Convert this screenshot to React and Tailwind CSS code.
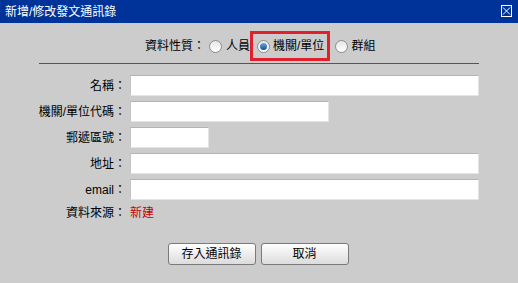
import { useState } from 'react';

const FONT = 'font-["Liberation_Sans","Noto_Sans_CJK_TC",sans-serif]';

function Radio({ checked }) {
    return (
        <span className="flex h-[13px] w-[13px] shrink-0 items-center justify-center rounded-full border border-[#8c8c8c] bg-gradient-to-b from-[#e6e6e6] to-white">
            {checked && (
                <span className="h-[7px] w-[7px] rounded-full bg-gradient-to-b from-[#6aa8e0] to-[#0f4f96]" />
            )}
        </span>
    );
}

function Field({ label, width }) {
    return (
        <div className="flex h-[21px] items-center">
            <span className="w-[126px] text-right">{label}</span>
            <input
                type="text"
                className={`ml-[4px] h-[21px] ${width} border border-t-[#b4b4b4] border-l-[#c4c4c4] border-r-[#e4e4e4] border-b-[#e4e4e4] bg-white outline-none`}
            />
        </div>
    );
}

export default function App() {
    const [kind, setKind] = useState('org');

    return (
        <div className={`h-[283px] w-[518px] bg-[#cccccc] text-[12px] leading-none text-black ${FONT}`}>
            {/* Title bar */}
            <div className="flex h-[23px] items-center justify-between bg-[#003399] pl-[5px] pr-[6px] text-white">
                <span>新增/修改發文通訊錄</span>
                <svg width="11" height="12" viewBox="0 0 11 12" className="mb-[1px]">
                    <rect x="0.5" y="0.5" width="10" height="11" fill="none" stroke="white" />
                    <path d="M2 2.5 L9 9.5 M9 2.5 L2 9.5" stroke="white" strokeWidth="1" />
                </svg>
            </div>

            {/* Type selector */}
            <div className="mt-[8px] flex h-[30px] items-center pl-[145px]">
                <span>資料性質：</span>
                <button className="ml-[4px] flex items-center gap-[4px]" onClick={() => setKind('person')}>
                    <Radio checked={kind === 'person'} />
                    <span>人員</span>
                </button>
                <button
                    className="flex h-[30px] items-center gap-[3px] border-[3px] border-[#e0202a] pl-[4px] pr-[3px]"
                    onClick={() => setKind('org')}
                >
                    <Radio checked={kind === 'org'} />
                    <span>機關/單位</span>
                </button>
                <button className="ml-[5px] flex items-center gap-[3px]" onClick={() => setKind('group')}>
                    <Radio checked={kind === 'group'} />
                    <span>群組</span>
                </button>
            </div>
            <div className="mx-[39px] mt-[2px] border-t border-[#555555]" />

            {/* Fields */}
            <div className="mt-[11px] flex flex-col gap-[5px]">
                <Field label="名稱：" width="w-[349px]" />
                <Field label="機關/單位代碼：" width="w-[199px]" />
                <Field label="郵遞區號：" width="w-[79px]" />
                <Field label="地址：" width="w-[349px]" />
                <Field label="email：" width="w-[349px]" />
                <div className="flex h-[16px] items-center">
                    <span className="w-[126px] text-right">資料來源：</span>
                    <span className="ml-[4px] text-[#c00000]">新建</span>
                </div>
            </div>

            {/* Actions */}
            <div className="mt-[22px] flex justify-center gap-[5px] pr-[2px]">
                <button className="h-[22px] w-[88px] rounded-[3px] border border-[#7a7a7a] bg-gradient-to-b from-white to-[#dcdcdc]">
                    存入通訊錄
                </button>
                <button className="h-[22px] w-[88px] rounded-[3px] border border-[#7a7a7a] bg-gradient-to-b from-white to-[#dcdcdc]">
                    取消
                </button>
            </div>
        </div>
    );
}
